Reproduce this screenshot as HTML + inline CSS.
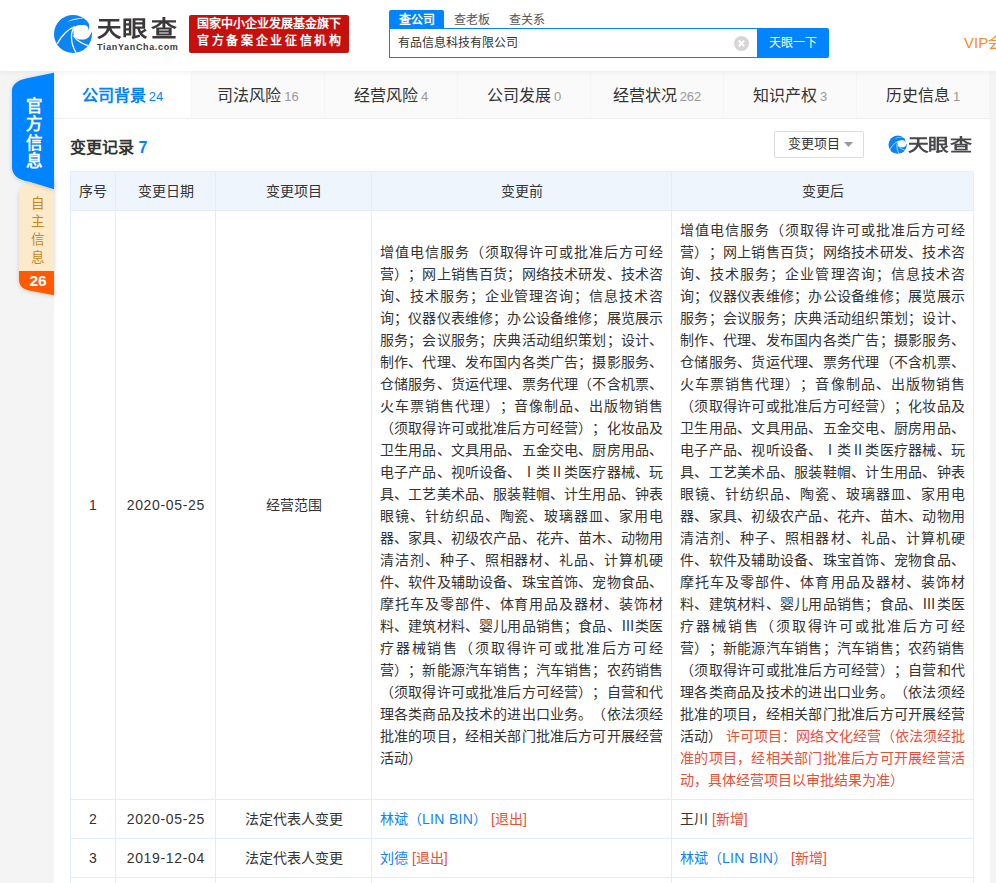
<!DOCTYPE html>
<html lang="zh-CN"><head><meta charset="utf-8">
<style>
*{box-sizing:border-box;margin:0;padding:0;text-spacing-trim:space-all}
html,body{width:996px;height:883px;overflow:hidden}
body{background:#f4f4f4;font-family:"Liberation Sans",sans-serif;color:#333;position:relative}
#hdr{position:absolute;left:0;top:0;width:996px;height:71px;background:#fff;box-shadow:0 1px 6px rgba(0,0,0,.06);z-index:2}
.abs{position:absolute}
#panel{position:absolute;left:54px;top:71px;width:936px;height:812px;background:#fff}
#tabs{position:absolute;left:0;top:0;width:936px;height:48px;border-bottom:1px solid #efefef;background:#fafafa;display:flex}
#tabs div{flex:0 0 133px;text-align:center;font-size:16px;line-height:50px;height:47px;color:#333;border-right:1px solid #f5f5f5}
#tabs div span{font-size:13px;color:#999;margin-left:3px}
#tabs div.on{background:#fff;color:#0084ff;font-weight:bold}
#tabs div.on span{color:#0084ff;font-weight:normal}
table{position:absolute;left:16px;top:100px;border-collapse:collapse;table-layout:fixed;width:903px}
td,th{border:1px solid #e3edf7;font-size:14px;font-weight:normal;text-align:center;vertical-align:middle;line-height:22px}
th{background:#eef5fd;height:39px}
td{height:39px}
td.tx{text-align:left;padding:8px 8px 8px 8px}
.ln{display:block;text-align:justify;text-align-last:justify;white-space:nowrap}
.ll{text-align-last:left}
td.dt{letter-spacing:.65px;text-indent:.65px}
.en{letter-spacing:.3px}
.red{color:#ec4e36}
.blue{color:#0f84f5}
</style></head><body>
<div id="hdr">
  <svg width="0" height="0" style="position:absolute"><defs><symbol id="lg" viewBox="53 14 40 40">
    <circle cx="73" cy="34" r="19" fill="#0b84f6"/>
    <path d="M73.5,29 C74.5,26.5 77,25.2 80,25.1 L84.8,25.1 C87,25.3 88.2,27 88.1,28.5 C88,29.5 87.8,30.2 87.5,30.6 C88.3,29.8 89,28.5 89.2,27 C89.4,25.5 89.2,24 88.6,22.5 L96,18 L96,32 L91.6,32 C90.5,35 89.5,36.5 88,37.7 C86.5,39 84.5,39.6 82.6,39.6 C80.5,39.6 78.5,39.5 77.2,38.8 C75.8,38.2 74.9,37.3 74.2,36.5 C73.6,35 73.3,33 73.5,29 Z" fill="#fff"/>
    <path d="M57.3,43.6 C61,37 67,29.5 74.8,26.7" stroke="#fff" stroke-width="1.4" fill="none"/>
    <path d="M66.6,21.9 C71.5,19 77.5,17.5 83.8,18.4 C77.5,18.9 72,20.3 66.6,21.9 Z" fill="#fff"/>
    <path d="M74.6,26.8 C72,30 71.3,34 71.5,38 C71.7,44 73.5,48.5 76.3,53" stroke="#fff" stroke-width="1.3" fill="none"/>
    <path d="M73.2,35.5 C75,38.5 77.5,40.6 80.5,42.3 C82.5,43.5 85,44.6 88,45.6" stroke="#fff" stroke-width="1.3" fill="none"/>
  </symbol></defs></svg><svg class="abs" style="left:53px;top:14px" width="40" height="40"><use href="#lg"/></svg>
  <div class="abs" style="left:97.4px;top:16.5px;font-size:22px;line-height:24px;color:#3b3839;font-weight:bold;transform:scaleX(1.11);transform-origin:0 0">天</div>
  <div class="abs" style="left:122.4px;top:16.5px;font-size:22px;line-height:24px;color:#3b3839;font-weight:bold;transform:scaleX(1.154);transform-origin:0 0">眼</div>
  <div class="abs" style="left:150.65px;top:16.5px;font-size:22px;line-height:24px;color:#3b3839;font-weight:bold;transform:scaleX(1.18);transform-origin:0 0">查</div>
  <div class="abs" style="left:97px;top:42px;font-size:9px;line-height:10px;color:#3d3a3b;font-weight:bold;letter-spacing:.65px;white-space:nowrap">TianYanCha.com</div>
  <div class="abs" style="left:189px;top:15px;width:160px;height:38px;background:#c6100e;border-radius:2px;color:#fff;font-size:12px;line-height:17px;padding:1px 0 0 8px;font-weight:bold"><div style="width:144px;text-align:justify;text-align-last:justify">国家中小企业发展基金旗下</div><div style="width:144px;text-align:justify;text-align-last:justify">官方备案企业征信机构</div></div>
  <div class="abs" style="left:389px;top:10px;width:55px;height:19px;background:#0084ff;border-radius:2px 2px 0 0;color:#fff;font-size:12px;line-height:20px;text-align:center;font-weight:bold">查公司</div>
  <div class="abs" style="left:454px;top:10px;font-size:12px;line-height:20px;color:#555">查老板</div>
  <div class="abs" style="left:509px;top:10px;font-size:12px;line-height:20px;color:#555">查关系</div>
  <div class="abs" style="left:389px;top:28px;width:368px;height:30px;border:1px solid #0084ff;border-right:none;background:#fff"></div>
  <div class="abs" style="left:398px;top:28px;font-size:12px;line-height:30px;color:#333">有品信息科技有限公司</div>
  <svg class="abs" style="left:734px;top:36px" width="15" height="15" viewBox="0 0 15 15"><circle cx="7.5" cy="7.5" r="7.5" fill="#d6d6d6"/><path d="M4.8,4.8 L10.2,10.2 M10.2,4.8 L4.8,10.2" stroke="#fff" stroke-width="2"/></svg>
  <div class="abs" style="left:757px;top:28px;width:72px;height:30px;background:#0084ff;border-radius:0 2px 2px 0;color:#fff;font-size:12px;line-height:30px;text-align:center">天眼一下</div>
  <div class="abs" style="left:964px;top:33px;font-size:15px;line-height:20px;color:#ff8a25;white-space:nowrap">VIP会员</div>
</div>
<svg class="abs" style="left:0;top:60px;z-index:1;overflow:visible" width="60" height="250" viewBox="0 60 60 250">
  <defs><filter id="sh" x="-50%" y="-20%" width="200%" height="140%"><feDropShadow dx="0" dy="1" stdDeviation="2" flood-color="#000" flood-opacity=".18"/></filter></defs>
  <path d="M54,178 L30,183.6 C23,185.2 19,189 19,196 L19,279 C19,286 22.5,289 28.7,290.4 L54,295.2 Z" fill="#fdeacb" filter="url(#sh)"/>
  <path d="M54,271 L19,271 L19,279 C19,286 22.5,289 28.7,290.4 L54,295.2 Z" fill="#ff5a00"/>
  <path d="M54,72.7 L27,78.3 C16.5,80.6 12,85 12,91 L12,167 C12,175 17.5,179.5 28.8,181.5 L54,189.3 Z" fill="#0084ff" filter="url(#sh)"/>
</svg>
<div class="abs" style="left:25.5px;top:96.8px;width:17px;font-size:16.5px;line-height:18.4px;color:#fff;font-weight:bold;text-align:center;z-index:3">官<br>方<br>信<br>息</div>
<div class="abs" style="left:29.5px;top:195.3px;width:15px;font-size:13.5px;line-height:18px;color:#cc8618;font-weight:normal;text-align:center;z-index:3">自<br>主<br>信<br>息</div>
<div class="abs" style="left:24px;top:270.5px;width:28px;font-size:15.5px;line-height:19px;color:#fff;font-weight:bold;text-align:center;z-index:3">26</div>
<div id="panel">
  <div id="tabs">
    <div class="on" style="flex-basis:138px">公司背景<span>24</span></div>
    <div>司法风险<span>16</span></div>
    <div>经营风险<span>4</span></div>
    <div>公司发展<span>0</span></div>
    <div>经营状况<span>262</span></div>
    <div>知识产权<span>3</span></div>
    <div>历史信息<span>1</span></div>
  </div>
  <div class="abs" style="left:16px;top:66px;font-size:16px;line-height:22px;font-weight:bold;color:#333">变更记录 <span style="color:#0084ff">7</span></div>
  <div class="abs" style="left:720px;top:60px;width:90px;height:27px;border:1px solid #dcdcdc;border-radius:2px;font-size:13px;line-height:24px;color:#333;padding-left:13px;white-space:nowrap">变更项目</div>
  <svg class="abs" style="left:790px;top:71px" width="9" height="5" viewBox="0 0 9 5"><path d="M0,0 L9,0 L4.5,5 Z" fill="#999"/></svg>
  <svg class="abs" style="left:833.5px;top:64.3px" width="19.3" height="19.3"><use href="#lg"/></svg>
  <div class="abs" style="left:854.3px;top:65px;font-size:17.3px;line-height:19px;color:#48484c;font-weight:bold;transform:scaleX(1.2);transform-origin:0 0">天</div>
  <div class="abs" style="left:873.9px;top:65px;font-size:17.3px;line-height:19px;color:#48484c;font-weight:bold;transform:scaleX(1.2);transform-origin:0 0">眼</div>
  <div class="abs" style="left:895.8px;top:65px;font-size:17.3px;line-height:19px;color:#48484c;font-weight:bold;transform:scaleX(1.28);transform-origin:0 0">查</div>
  <table>
    <colgroup><col style="width:45px"><col style="width:100px"><col style="width:156px"><col style="width:300px"><col style="width:302px"></colgroup>
    <tr><th>序号</th><th>变更日期</th><th>变更项目</th><th>变更前</th><th>变更后</th></tr>
    <tr><td>1</td><td class="dt">2020-05-25</td><td>经营范围</td>
      <td class="tx" id="before"><div class="ln">增值电信服务（须取得许可或批准后方可经</div>
<div class="ln">营）；网上销售百货；网络技术研发、技术咨</div>
<div class="ln">询、技术服务；企业管理咨询；信息技术咨</div>
<div class="ln">询；仪器仪表维修；办公设备维修；展览展示</div>
<div class="ln">服务；会议服务；庆典活动组织策划；设计、</div>
<div class="ln">制作、代理、发布国内各类广告；摄影服务、</div>
<div class="ln">仓储服务、货运代理、票务代理（不含机票、</div>
<div class="ln">火车票销售代理）；音像制品、出版物销售</div>
<div class="ln">（须取得许可或批准后方可经营）；化妆品及</div>
<div class="ln">卫生用品、文具用品、五金交电、厨房用品、</div>
<div class="ln">电子产品、视听设备、Ⅰ类Ⅱ类医疗器械、玩</div>
<div class="ln">具、工艺美术品、服装鞋帽、计生用品、钟表</div>
<div class="ln">眼镜、针纺织品、陶瓷、玻璃器皿、家用电</div>
<div class="ln">器、家具、初级农产品、花卉、苗木、动物用</div>
<div class="ln">清洁剂、种子、照相器材、礼品、计算机硬</div>
<div class="ln">件、软件及辅助设备、珠宝首饰、宠物食品、</div>
<div class="ln">摩托车及零部件、体育用品及器材、装饰材</div>
<div class="ln">料、建筑材料、婴儿用品销售；食品、Ⅲ类医</div>
<div class="ln">疗器械销售（须取得许可或批准后方可经</div>
<div class="ln">营）；新能源汽车销售；汽车销售；农药销售</div>
<div class="ln">（须取得许可或批准后方可经营）；自营和代</div>
<div class="ln">理各类商品及技术的进出口业务。（依法须经</div>
<div class="ln">批准的项目，经相关部门批准后方可开展经营</div>
<div class="ln ll">活动）</div></td>
      <td class="tx" id="after"><div class="ln">增值电信服务（须取得许可或批准后方可经</div>
<div class="ln">营）；网上销售百货；网络技术研发、技术咨</div>
<div class="ln">询、技术服务；企业管理咨询；信息技术咨</div>
<div class="ln">询；仪器仪表维修；办公设备维修；展览展示</div>
<div class="ln">服务；会议服务；庆典活动组织策划；设计、</div>
<div class="ln">制作、代理、发布国内各类广告；摄影服务、</div>
<div class="ln">仓储服务、货运代理、票务代理（不含机票、</div>
<div class="ln">火车票销售代理）；音像制品、出版物销售</div>
<div class="ln">（须取得许可或批准后方可经营）；化妆品及</div>
<div class="ln">卫生用品、文具用品、五金交电、厨房用品、</div>
<div class="ln">电子产品、视听设备、Ⅰ类Ⅱ类医疗器械、玩</div>
<div class="ln">具、工艺美术品、服装鞋帽、计生用品、钟表</div>
<div class="ln">眼镜、针纺织品、陶瓷、玻璃器皿、家用电</div>
<div class="ln">器、家具、初级农产品、花卉、苗木、动物用</div>
<div class="ln">清洁剂、种子、照相器材、礼品、计算机硬</div>
<div class="ln">件、软件及辅助设备、珠宝首饰、宠物食品、</div>
<div class="ln">摩托车及零部件、体育用品及器材、装饰材</div>
<div class="ln">料、建筑材料、婴儿用品销售；食品、Ⅲ类医</div>
<div class="ln">疗器械销售（须取得许可或批准后方可经</div>
<div class="ln">营）；新能源汽车销售；汽车销售；农药销售</div>
<div class="ln">（须取得许可或批准后方可经营）；自营和代</div>
<div class="ln">理各类商品及技术的进出口业务。（依法须经</div>
<div class="ln">批准的项目，经相关部门批准后方可开展经营</div>
<div class="ln">活动）<span class="red"> 许可项目：网络文化经营（依法须经批</span></div>
<div class="ln"><span class="red">准的项目，经相关部门批准后方可开展经营活</span></div>
<div class="ln ll"><span class="red">动，具体经营项目以审批结果为准）</span></div></td></tr>
    <tr><td>2</td><td class="dt">2020-05-25</td><td>法定代表人变更</td><td class="tx"><span class="blue">林斌（<span class="en">LIN BIN</span>）</span> <span class="red">[退出]</span></td><td class="tx">王川 <span class="red">[新增]</span></td></tr>
    <tr><td>3</td><td class="dt">2019-12-04</td><td>法定代表人变更</td><td class="tx"><span class="blue">刘德</span> <span class="red">[退出]</span></td><td class="tx"><span class="blue">林斌（<span class="en">LIN BIN</span>）</span> <span class="red">[新增]</span></td></tr>
    <tr><td>4</td><td></td><td></td><td></td><td></td></tr>
  </table>
</div>
</body></html>
